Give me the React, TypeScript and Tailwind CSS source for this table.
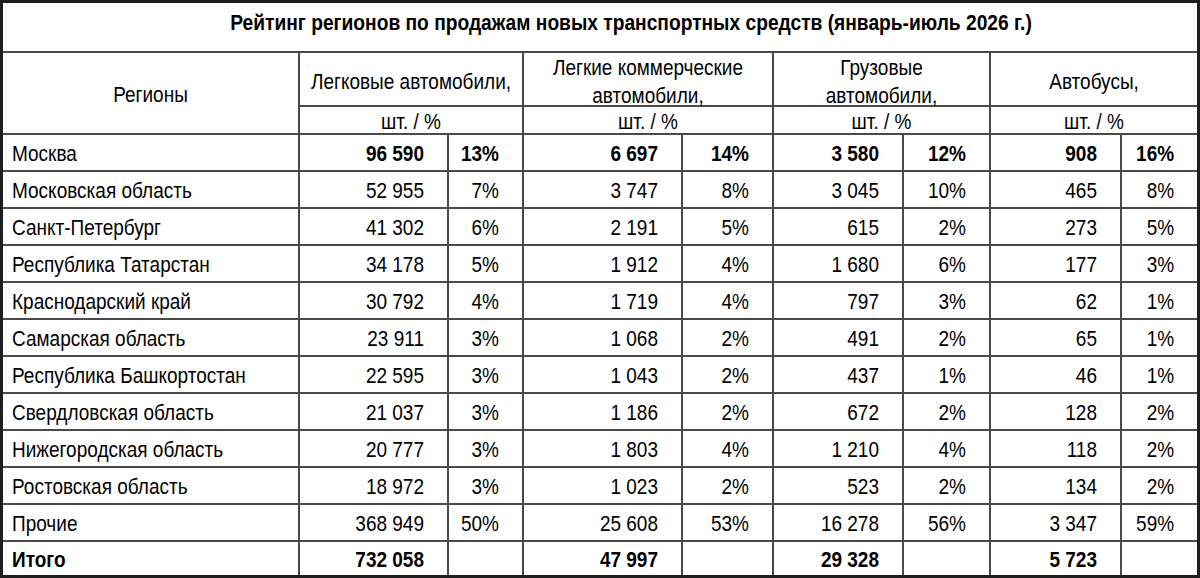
import React from "react";

type Row = { name: string; v: string[]; bold?: boolean; boldName?: boolean };

const rows: Row[] = [
  { name: "Москва", v: ["96 590", "13%", "6 697", "14%", "3 580", "12%", "908", "16%"], bold: true },
  { name: "Московская область", v: ["52 955", "7%", "3 747", "8%", "3 045", "10%", "465", "8%"] },
  { name: "Санкт-Петербург", v: ["41 302", "6%", "2 191", "5%", "615", "2%", "273", "5%"] },
  { name: "Республика Татарстан", v: ["34 178", "5%", "1 912", "4%", "1 680", "6%", "177", "3%"] },
  { name: "Краснодарский край", v: ["30 792", "4%", "1 719", "4%", "797", "3%", "62", "1%"] },
  { name: "Самарская область", v: ["23 911", "3%", "1 068", "2%", "491", "2%", "65", "1%"] },
  { name: "Республика Башкортостан", v: ["22 595", "3%", "1 043", "2%", "437", "1%", "46", "1%"] },
  { name: "Свердловская область", v: ["21 037", "3%", "1 186", "2%", "672", "2%", "128", "2%"] },
  { name: "Нижегородская область", v: ["20 777", "3%", "1 803", "4%", "1 210", "4%", "118", "2%"] },
  { name: "Ростовская область", v: ["18 972", "3%", "1 023", "2%", "523", "2%", "134", "2%"] },
  { name: "Прочие", v: ["368 949", "50%", "25 608", "53%", "16 278", "56%", "3 347", "59%"] },
  { name: "Итого", v: ["732 058", "", "47 997", "", "29 328", "", "5 723", ""], bold: true, boldName: true },
];

const cell = "border-[#4a4a4a] border-solid p-0";

function T({ children, low }: { children: React.ReactNode; low?: boolean }) {
  return (
    <span className={low ? "inline-block scale-y-[1.13] translate-y-[3px]" : "inline-block scale-y-[1.13]"}>
      {children}
    </span>
  );
}

export default function App() {
  return (
    <div
      className="w-[1200px] h-[578px] bg-white border-[3px] border-solid border-[#1e1e1e] overflow-hidden text-black text-[19px] leading-[22px]"
      style={{ fontFamily: '"Liberation Sans", Arial, sans-serif' }}
    >
      <table className="w-full table-fixed border-separate border-spacing-0">
        <colgroup>
          <col className="w-[297px]" />
          <col className="w-[149px]" />
          <col className="w-[75px]" />
          <col className="w-[159px]" />
          <col className="w-[91px]" />
          <col className="w-[130px]" />
          <col className="w-[87px]" />
          <col className="w-[131px]" />
          <col className="w-[75px]" />
        </colgroup>
        <tbody>
          <tr className="h-[50px]">
            <td colSpan={9} className={`${cell} border-b-2 text-center font-bold text-[19.2px] pl-[62px] pb-[9px]`}>
              <T>Рейтинг регионов по продажам новых транспортных средств (январь-июль 2026 г.)</T>
            </td>
          </tr>
          <tr className="h-[54px]">
            <td rowSpan={2} className={`${cell} border-b-2 border-r-2 text-center pt-[4px]`}>
              <T>Регионы</T>
            </td>
            <td colSpan={2} className={`${cell} border-b-2 border-r-2 text-center pt-[6px]`}>
              <T>Легковые автомобили,</T>
            </td>
            <td colSpan={2} className={`${cell} border-b-2 border-r-2 text-center leading-[25px] pt-[2px]`}>
              <T>Легкие коммерческие</T>
              <br />
              <T low>автомобили,</T>
            </td>
            <td colSpan={2} className={`${cell} border-b-2 border-r-2 text-center leading-[25px] pt-[2px]`}>
              <T>Грузовые</T>
              <br />
              <T low>автомобили,</T>
            </td>
            <td colSpan={2} className={`${cell} border-b-2 text-center pt-[6px]`}>
              <T>Автобусы,</T>
            </td>
          </tr>
          <tr className="h-[28px]">
            <td colSpan={2} className={`${cell} border-b-2 border-r-2 text-center pt-[4px]`}>
              <T>шт. / %</T>
            </td>
            <td colSpan={2} className={`${cell} border-b-2 border-r-2 text-center pt-[4px]`}>
              <T>шт. / %</T>
            </td>
            <td colSpan={2} className={`${cell} border-b-2 border-r-2 text-center pt-[4px]`}>
              <T>шт. / %</T>
            </td>
            <td colSpan={2} className={`${cell} border-b-2 text-center pt-[4px]`}>
              <T>шт. / %</T>
            </td>
          </tr>
          {rows.map((r, i) => {
            const last = i === rows.length - 1;
            return (
              <tr key={r.name} className={last ? "h-[33px]" : "h-[37px]"}>
                <td
                  className={`${cell} ${last ? "" : "border-b-2"} border-r-2 pl-[9px] pt-[2px] whitespace-nowrap ${
                    r.boldName ? "font-bold" : ""
                  }`}
                >
                  <T>{r.name}</T>
                </td>
                {r.v.map((val, j) => (
                  <td
                    key={j}
                    className={`${cell} ${last ? "" : "border-b-2"} ${j === 7 ? "" : "border-r-2"} text-right pr-[23px] pt-[2px] whitespace-nowrap ${
                      r.bold ? "font-bold" : ""
                    }`}
                  >
                    <T>{val}</T>
                  </td>
                ))}
              </tr>
            );
          })}
        </tbody>
      </table>
    </div>
  );
}
